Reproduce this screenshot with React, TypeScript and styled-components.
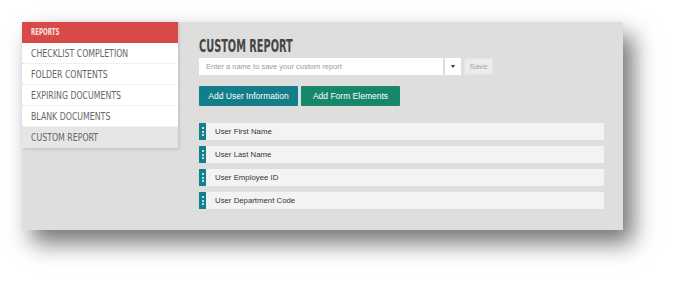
import React from "react";
import styled, { createGlobalStyle } from "styled-components";

const GlobalStyle = createGlobalStyle`
  body {
    margin: 0;
    background: #ffffff;
    font-family: "Liberation Sans", Arial, sans-serif;
  }
`;

const condensed = `"DejaVu Sans Condensed", "Liberation Sans", sans-serif`;

const reports = [
  "CHECKLIST COMPLETION",
  "FOLDER CONTENTS",
  "EXPIRING DOCUMENTS",
  "BLANK DOCUMENTS",
  "CUSTOM REPORT",
];

const fields = [
  "User First Name",
  "User Last Name",
  "User Employee ID",
  "User Department Code",
];

const Page = styled.div`
  padding: 22px 0 0 22px;
  height: 284px;
  box-sizing: border-box;
`;

const Panel = styled.div`
  width: 601px;
  height: 208px;
  display: flex;
  background: #dedede;
  box-shadow: 10px 13px 22px rgba(0, 0, 0, 0.55);
`;

const Sidebar = styled.div`
  width: 156px;
  align-self: flex-start;
  background: #fff;
  box-shadow: 1px 1px 3px rgba(0, 0, 0, 0.15);
`;

/* the reference uses a tall, narrow display face: squeeze a condensed one */
const Squeeze = styled.span<{ $x: number }>`
  display: inline-block;
  white-space: nowrap;
  transform: scaleX(${(p) => p.$x});
  transform-origin: left center;
`;

const SideHeader = styled.div`
  height: 21px;
  background: #d64b47;
  color: #fbe3e2;
  font-family: ${condensed};
  font-size: 8.5px;
  font-weight: bold;
  line-height: 21px;
  padding-left: 9px;
`;

const SideItem = styled.div<{ $active?: boolean }>`
  height: 20px;
  line-height: 21px;
  padding-left: 9px;
  font-family: ${condensed};
  font-size: 11px;
  color: #666;
  background: ${(p) => (p.$active ? "#e6e6e6" : "#fff")};
  border-bottom: 1px dotted ${(p) => (p.$active ? "transparent" : "#e2e2e2")};
`;

const Main = styled.div`
  flex: 1;
  padding: 13px 19px 0 21px;
`;

const Title = styled.h1`
  margin: 0;
  font-family: ${condensed};
  font-size: 17px;
  font-weight: bold;
  color: #454545;
  height: 23px;
  line-height: 23px;
`;

const SaveRow = styled.div`
  display: flex;
  align-items: center;
  height: 17px;
`;

const NameInput = styled.div`
  width: 237px;
  height: 17px;
  background: #fff;
  color: #9a9a9a;
  font-size: 7.5px;
  line-height: 17px;
  padding-left: 7px;
`;

const Caret = styled.div`
  width: 16px;
  height: 17px;
  margin-left: 2px;
  background: #fff;
  display: flex;
  align-items: center;
  justify-content: center;
  &::after {
    content: "";
    border-left: 2.5px solid transparent;
    border-right: 2.5px solid transparent;
    border-top: 3px solid #333;
  }
`;

const SaveButton = styled.div`
  margin-left: 3px;
  width: 29px;
  height: 17px;
  background: #ececec;
  border: 1px solid #e4e4e4;
  box-sizing: border-box;
  color: #a4a4a4;
  font-size: 8px;
  line-height: 15px;
  text-align: center;
`;

const ButtonRow = styled.div`
  display: flex;
  gap: 3px;
  margin-top: 11px;
`;

const ActionButton = styled.div<{ $color: string }>`
  width: 99px;
  height: 20px;
  background: ${(p) => p.$color};
  color: #fff;
  font-size: 8.5px;
  line-height: 20px;
  text-align: center;
  border-radius: 1px;
`;

const FieldList = styled.div`
  display: flex;
  flex-direction: column;
  gap: 6px;
  margin-top: 17px;
`;

const FieldRow = styled.div`
  height: 17px;
  display: flex;
  align-items: center;
  background: #f3f3f3;
`;

const Handle = styled.div`
  width: 7px;
  height: 17px;
  background: #12808a;
  display: flex;
  flex-direction: column;
  align-items: center;
  justify-content: center;
  gap: 1.5px;
  span {
    width: 2px;
    height: 2px;
    border-radius: 50%;
    background: #fff;
  }
`;

const FieldLabel = styled.div`
  margin-left: 9px;
  font-size: 7.8px;
  color: #333;
`;

export default function App() {
  return (
    <Page>
      <GlobalStyle />
      <Panel>
        <Sidebar>
          <SideHeader>
            <Squeeze $x={0.72}>REPORTS</Squeeze>
          </SideHeader>
          {reports.map((r, i) => (
            <SideItem key={r} $active={i === reports.length - 1}>
              <Squeeze $x={0.79}>{r}</Squeeze>
            </SideItem>
          ))}
        </Sidebar>
        <Main>
          <Title>
            <Squeeze $x={0.64}>CUSTOM REPORT</Squeeze>
          </Title>
          <SaveRow>
            <NameInput>Enter a name to save your custom report</NameInput>
            <Caret />
            <SaveButton>Save</SaveButton>
          </SaveRow>
          <ButtonRow>
            <ActionButton $color="#137d89">Add User Information</ActionButton>
            <ActionButton $color="#16876a">Add Form Elements</ActionButton>
          </ButtonRow>
          <FieldList>
            {fields.map((f) => (
              <FieldRow key={f}>
                <Handle>
                  <span />
                  <span />
                  <span />
                </Handle>
                <FieldLabel>{f}</FieldLabel>
              </FieldRow>
            ))}
          </FieldList>
        </Main>
      </Panel>
    </Page>
  );
}
